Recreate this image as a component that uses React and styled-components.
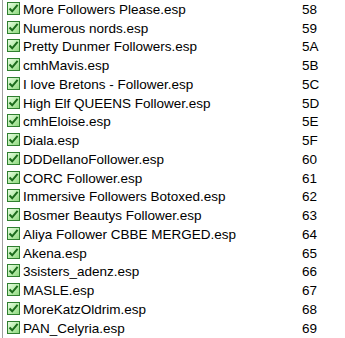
import React from "react";
import styled, { createGlobalStyle } from "styled-components";

const GlobalStyle = createGlobalStyle`
  html, body {
    margin: 0;
    padding: 0;
    background: #fff;
  }
`;

const List = styled.div`
  height: 338px;
  width: 343px;
  overflow: hidden;
  box-sizing: border-box;
  border-left: 1px solid #a0a0a0;
  margin-left: 2px;
  font-family: "Liberation Sans", Arial, sans-serif;
  font-size: 13.5px;
  color: #000;
`;

const Row = styled.div`
  display: grid;
  grid-template-columns: 20px 1fr 43px;
  align-items: center;
  height: 18.75px;
`;

const Box = styled.span`
  box-sizing: border-box;
  width: 13px;
  height: 13px;
  margin-left: 4px;
  margin-top: -2px;
  border: 1px solid #2f7f2f;
  background: linear-gradient(135deg, #e6fbe0 0%, #b7ecaa 55%, #8fd77f 100%);
  display: flex;
  align-items: center;
  justify-content: center;
`;

const Name = styled.span`
  white-space: nowrap;
`;

const Index = styled.span`
  padding-left: 0;
`;

const plugins = [
  ["More Followers Please.esp", "58"],
  ["Numerous nords.esp", "59"],
  ["Pretty Dunmer Followers.esp", "5A"],
  ["cmhMavis.esp", "5B"],
  ["I love Bretons - Follower.esp", "5C"],
  ["High Elf QUEENS Follower.esp", "5D"],
  ["cmhEloise.esp", "5E"],
  ["Diala.esp", "5F"],
  ["DDDellanoFollower.esp", "60"],
  ["CORC Follower.esp", "61"],
  ["Immersive Followers Botoxed.esp", "62"],
  ["Bosmer Beautys Follower.esp", "63"],
  ["Aliya Follower CBBE MERGED.esp", "64"],
  ["Akena.esp", "65"],
  ["3sisters_adenz.esp", "66"],
  ["MASLE.esp", "67"],
  ["MoreKatzOldrim.esp", "68"],
  ["PAN_Celyria.esp", "69"],
];

function Check() {
  return (
    <svg width="11" height="11" viewBox="0 0 11 11">
      <path d="M1.5 5.5 L4.2 8.3 L9.6 1.8" fill="none" stroke="#1c6b1c" strokeWidth="2" />
    </svg>
  );
}

export default function App() {
  return (
    <>
      <GlobalStyle />
      <List>
        {plugins.map(([name, idx]) => (
          <Row key={idx}>
            <Box>
              <Check />
            </Box>
            <Name>{name}</Name>
            <Index>{idx}</Index>
          </Row>
        ))}
      </List>
    </>
  );
}
